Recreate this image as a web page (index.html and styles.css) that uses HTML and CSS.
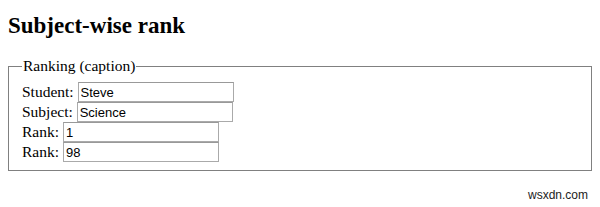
FILE: index.html
```html
<!DOCTYPE html>
<html lang="en">
<head>
  <meta charset="UTF-8" />
  <title>Subject-wise rank</title>
  <link rel="stylesheet" href="styles.css">
</head>
<body>

  <h2>Subject-wise rank</h2>

  <form>
    <fieldset>
      <legend>Ranking (caption)</legend>
      <label>Student: <input type="text" value="Steve"></label><br>
      <label>Subject: <input type="text" value="Science"></label><br>
      <label>Rank: <input type="text" value="1"></label><br>
      <label>Rank: <input type="text" value="98"></label>
    </fieldset>
  </form>

  <div class="watermark">wsxdn.com</div>

</body>
</html>
```

FILE: styles.css
```css
body {
  font-family: "Liberation Serif", "Times New Roman", serif;
  font-size: 15.5px;
  color: #000;
  margin: 8px;
  position: relative;
  height: 191px;
}

h2 {
  font-size: 23px;
  margin: 5px 0 17px;
}

fieldset {
  border: 1px solid #808080;
  padding: 6px 13px 8px;
  margin: 0;
  line-height: 20px;
}

legend {
  padding: 0 1px;
}

input {
  font-family: "Liberation Sans", Arial, sans-serif;
  font-size: 13px;
  width: 156px;
  height: 20px;
  box-sizing: border-box;
  border: 1px solid #aaa;
  border-top-color: #999;
  padding: 0 2px;
  margin: 0;
  vertical-align: top;
}

.watermark {
  position: absolute;
  right: 4px;
  bottom: -3px;
  font-family: "Liberation Sans", Arial, sans-serif;
  font-size: 12px;
  color: #222;
}
```
